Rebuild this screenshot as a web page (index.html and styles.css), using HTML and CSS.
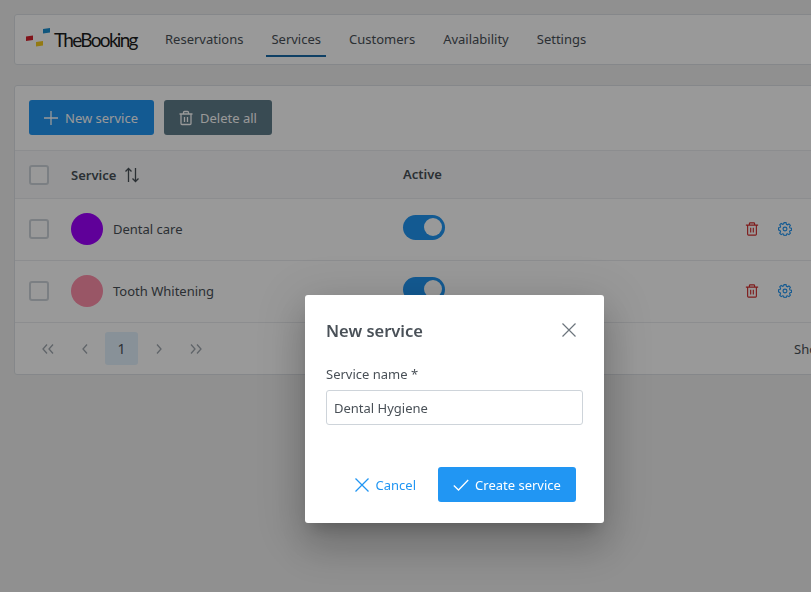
FILE: index.html
```html
<!DOCTYPE html>
<html lang="en">
<head>
  <meta charset="UTF-8">
  <meta name="viewport" content="width=device-width, initial-scale=1.0">
  <title>TheBooking - Services</title>
  <link rel="stylesheet" href="styles.css">
</head>
<body>
<div class="page">
  <header class="topbar">
    <div class="logo">
      <svg class="logo-mark" width="26" height="20" viewBox="0 0 26 20">
        <polygon points="0,8.500 7,7.500 7,12 0,13" fill="#d6202c"/>
        <polygon points="10,14 17,13 17,17.500 10,18.500" fill="#f5cb1e"/>
        <polygon points="17,1 24,0 24,4.500 17,5.500" fill="#1c8fd0"/>
      </svg>
      <span class="logo-text">TheBooking</span>
    </div>
    <nav class="nav">
      <a class="nav-item">Reservations</a>
      <a class="nav-item active">Services</a>
      <a class="nav-item">Customers</a>
      <a class="nav-item">Availability</a>
      <a class="nav-item">Settings</a>
    </nav>
  </header>

  <section class="card">
    <div class="toolbar">
      <button class="btn btn-primary">
        <svg class="icon" width="16" height="16" viewBox="0 0 16 16"><path d="M8 1v14M1 8h14"/></svg>
        New service
      </button>
      <button class="btn btn-secondary">
        <svg class="icon" width="16" height="16" viewBox="0 0 16 16"><path d="M1.500 4h13M5.500 4V2.500a1 1 0 0 1 1-1h3a1 1 0 0 1 1 1V4M3 4v9.500a1 1 0 0 0 1 1h8a1 1 0 0 0 1-1V4M6.500 7v5M9.500 7v5"/></svg>
        Delete all
      </button>
    </div>

    <div class="row row-head">
      <span class="check"></span>
      <div class="col-service">
        <span class="head-label">Service</span>
        <svg class="sort" width="16" height="16" viewBox="0 0 16 16"><path d="M4.500 15V1.500M1.500 4.500l3-3 3 3M11.500 1v13.500M8.500 11.500l3 3 3-3"/></svg>
      </div>
      <div class="col-active head-label">Active</div>
    </div>

    <div class="row">
      <span class="check"></span>
      <div class="col-service">
        <span class="avatar avatar-purple"></span>
        <span>Dental care</span>
      </div>
      <div class="col-active"><span class="toggle"></span></div>
      <div class="row-actions">
        <svg class="trash" width="14" height="14" viewBox="0 0 16 16"><path d="M1 3.500h14M5 3.500V2a1 1 0 0 1 1-1h4a1 1 0 0 1 1 1v1.500M3 3.500V14a1 1 0 0 0 1 1h8a1 1 0 0 0 1-1V3.500M6.500 6.500v5.500M9.500 6.500v5.500"/></svg>
        <svg class="gear" width="14" height="14" viewBox="0 0 16 16"><circle cx="8" cy="8" r="2.200"/><path d="M6.800 1h2.400l.4 1.900 1.300.6 1.700-1 1.700 1.700-1 1.700.5 1.300 1.900.4v2.400l-1.900.4-.5 1.300 1 1.700-1.700 1.700-1.700-1-1.300.5-.4 1.900H6.800l-.4-1.900-1.300-.5-1.700 1-1.700-1.700 1-1.700-.5-1.300L.3 9.400V7l1.900-.4.500-1.300-1-1.700 1.700-1.700 1.700 1 1.300-.6z" transform="translate(.3 -.200) scale(.97)"/></svg>
      </div>
    </div>

    <div class="row">
      <span class="check"></span>
      <div class="col-service">
        <span class="avatar avatar-pink"></span>
        <span>Tooth Whitening</span>
      </div>
      <div class="col-active"><span class="toggle"></span></div>
      <div class="row-actions">
        <svg class="trash" width="14" height="14" viewBox="0 0 16 16"><path d="M1 3.500h14M5 3.500V2a1 1 0 0 1 1-1h4a1 1 0 0 1 1 1v1.500M3 3.500V14a1 1 0 0 0 1 1h8a1 1 0 0 0 1-1V3.500M6.500 6.500v5.500M9.500 6.500v5.500"/></svg>
        <svg class="gear" width="14" height="14" viewBox="0 0 16 16"><circle cx="8" cy="8" r="2.200"/><path d="M6.800 1h2.400l.4 1.900 1.300.6 1.700-1 1.700 1.700-1 1.700.5 1.300 1.900.4v2.400l-1.900.4-.5 1.300 1 1.700-1.700 1.700-1.700-1-1.300.5-.4 1.900H6.800l-.4-1.900-1.300-.5-1.700 1-1.700-1.700 1-1.700-.5-1.300L.3 9.400V7l1.900-.4.500-1.300-1-1.700 1.700-1.700 1.700 1 1.300-.6z" transform="translate(.3 -.200) scale(.97)"/></svg>
      </div>
    </div>

    <div class="pager">
      <span class="page-btn"><svg width="14" height="14" viewBox="0 0 14 14"><path d="M6 2.500 2 7l4 4.500M12 2.500 8 7l4 4.500"/></svg></span>
      <span class="page-btn"><svg width="14" height="14" viewBox="0 0 14 14"><path d="M9 2.500 5 7l4 4.500"/></svg></span>
      <span class="page-btn current">1</span>
      <span class="page-btn"><svg width="14" height="14" viewBox="0 0 14 14"><path d="M5 2.500 9 7l-4 4.500"/></svg></span>
      <span class="page-btn"><svg width="14" height="14" viewBox="0 0 14 14"><path d="M2 2.500 6 7l-4 4.500M8 2.500 12 7l-4 4.500"/></svg></span>
      <span class="pager-info">Showing 1 to 2 of 2 entries</span>
    </div>
  </section>
</div>

<div class="overlay"></div>

<div class="dialog">
  <div class="dialog-head">
    <h2 class="dialog-title">New service</h2>
    <svg class="dialog-close" width="14" height="14" viewBox="0 0 14 14"><path d="M.5.500l13 13M13.500.500l-13 13"/></svg>
  </div>
  <label class="field-label" for="serviceName">Service name *</label>
  <input class="field-input" id="serviceName" type="text" value="Dental Hygiene">
  <div class="dialog-foot">
    <button class="btn btn-text">
      <svg class="icon" width="14" height="14" viewBox="0 0 14 14"><path d="M.5.500l13 13M13.500.500l-13 13"/></svg>
      Cancel
    </button>
    <button class="btn btn-create">
      <svg class="icon" width="16" height="12" viewBox="0 0 16 12"><path d="M.8 6.500 5.500 11 15.200 1"/></svg>
      Create service
    </button>
  </div>
</div>
</body>
</html>
```

FILE: styles.css
```css
:root {
  --primary-color: #2196f3;
  --secondary-color: #607d8b;
  --danger-color: #d32f2f;
  --text-color: #495057;
  --border-color: #dee2e6;
  --input-border: #ced4da;
}

* {
  box-sizing: border-box;
  font-family: "Noto Sans", sans-serif;
}

html, body {
  height: 100%;
}

body {
  margin: 0;
  overflow: hidden;
  background: #f1f1f1;
  color: var(--text-color);
  font-size: 13px;
}

svg {
  fill: none;
  stroke: currentColor;
  stroke-width: 1.3;
  flex: none;
}

.page {
  width: 1000px;
  padding: 14px;
}

/* top bar */
.topbar {
  display: flex;
  align-items: center;
  height: 51px;
  margin-bottom: 20px;
  padding-left: 11px;
  background: #fff;
  border: 1px solid var(--border-color);
  border-radius: 3px;
}

.logo {
  display: flex;
  align-items: center;
  width: 124px;
}

.logo-mark {
  stroke: none;
  margin-right: 2px;
  margin-top: -3px;
}

.logo-text {
  font-family: "Lato", sans-serif;
  font-size: 19px;
  letter-spacing: -1.7px;
  color: #1c1c1c;
}

.nav {
  display: flex;
  gap: 18px;
  margin-left: 10px;
}

.nav-item {
  display: flex;
  align-items: center;
  height: 34px;
  padding: 1px 5px 0;
  border-bottom: 2px solid transparent;
}

.nav-item.active {
  border-bottom-color: #1a6ba8;
}

/* services card */
.card {
  background: #fff;
  border: 1px solid var(--border-color);
  border-radius: 3px;
}

.toolbar {
  display: flex;
  gap: 10px;
  padding: 14px;
  height: 64px;
}

.btn {
  display: inline-flex;
  align-items: center;
  gap: 6px;
  height: 35px;
  padding: 0 14px;
  border: none;
  border-radius: 3px;
  font-size: 13px;
  color: #fff;
}

.btn-primary {
  width: 125px;
  background: var(--primary-color);
}

.btn-secondary {
  width: 108px;
  background: var(--secondary-color);
}

.row {
  display: flex;
  align-items: center;
  height: 62px;
  padding: 0 0 2px 14px;
  border-top: 1px solid #e9ecef;
}

.row-head {
  height: 48px;
  padding-bottom: 0;
  background: #f8f9fa;
}

.check {
  width: 20px;
  height: 20px;
  margin-right: 22px;
  background: #fff;
  border: 2px solid var(--input-border);
  border-radius: 3px;
}

.col-service {
  display: flex;
  align-items: center;
  width: 332px;
}

.head-label {
  font-weight: 600;
}

.sort {
  margin-left: 8px;
}

.avatar {
  width: 32px;
  height: 32px;
  margin-right: 10px;
  border-radius: 50%;
}

.avatar-purple {
  background: #9e00ff;
}

.avatar-pink {
  background: #ff8fab;
}

.col-active {
  margin-top: -3px;
}

.row-head .col-active {
  margin-top: -1px;
}

.toggle {
  display: block;
  position: relative;
  width: 42px;
  height: 25px;
  background: var(--primary-color);
  border-radius: 13px;
}

.toggle::after {
  content: "";
  position: absolute;
  top: 3.5px;
  right: 3px;
  width: 18px;
  height: 18px;
  background: #fff;
  border-radius: 50%;
}

.row-actions {
  display: flex;
  gap: 19px;
  margin-left: 300px;
}

.trash {
  color: var(--danger-color);
}

.gear {
  color: var(--primary-color);
}

/* pagination */
.pager {
  display: flex;
  align-items: center;
  gap: 4px;
  height: 52px;
  padding-left: 16px;
  border-top: 1px solid #e9ecef;
}

.page-btn {
  display: flex;
  align-items: center;
  justify-content: center;
  width: 33px;
  height: 33px;
  border-radius: 3px;
  color: #a0a8b0;
}

.page-btn.current {
  background: #e3f2fd;
  color: var(--text-color);
  font-size: 14px;
}

.pager-info {
  margin-left: 578px;
}

/* modal */
.overlay {
  position: fixed;
  inset: 0;
  background: rgba(0, 0, 0, 0.4);
}

.dialog {
  position: absolute;
  left: 305px;
  top: 295px;
  width: 299px;
  height: 228px;
  padding: 21px;
  background: #fff;
  border-radius: 3px;
  box-shadow: 0 11px 15px -7px rgba(0, 0, 0, 0.2), 0 24px 38px 3px rgba(0, 0, 0, 0.14), 0 9px 46px 8px rgba(0, 0, 0, 0.12);
}

.dialog-head {
  display: flex;
  align-items: center;
  justify-content: space-between;
  height: 28px;
  margin-bottom: 21px;
  padding-right: 7px;
}

.dialog-title {
  margin: 0;
  font-size: 16.500px;
  font-weight: 600;
}

.dialog-close {
  color: #6c757d;
  stroke-width: 1.2;
}

.field-label {
  display: block;
  margin-bottom: 7px;
}

.field-input {
  display: block;
  width: 257px;
  height: 35px;
  padding: 0 7px;
  border: 1px solid var(--input-border);
  border-radius: 3px;
  font-size: 13px;
  color: var(--text-color);
}

.dialog-foot {
  display: flex;
  justify-content: flex-end;
  gap: 8px;
  margin-top: 42px;
  margin-right: 7px;
}

.btn-text {
  gap: 7px;
  background: transparent;
  color: var(--primary-color);
}

.btn-create {
  width: 138px;
  justify-content: center;
  background: var(--primary-color);
}
```
